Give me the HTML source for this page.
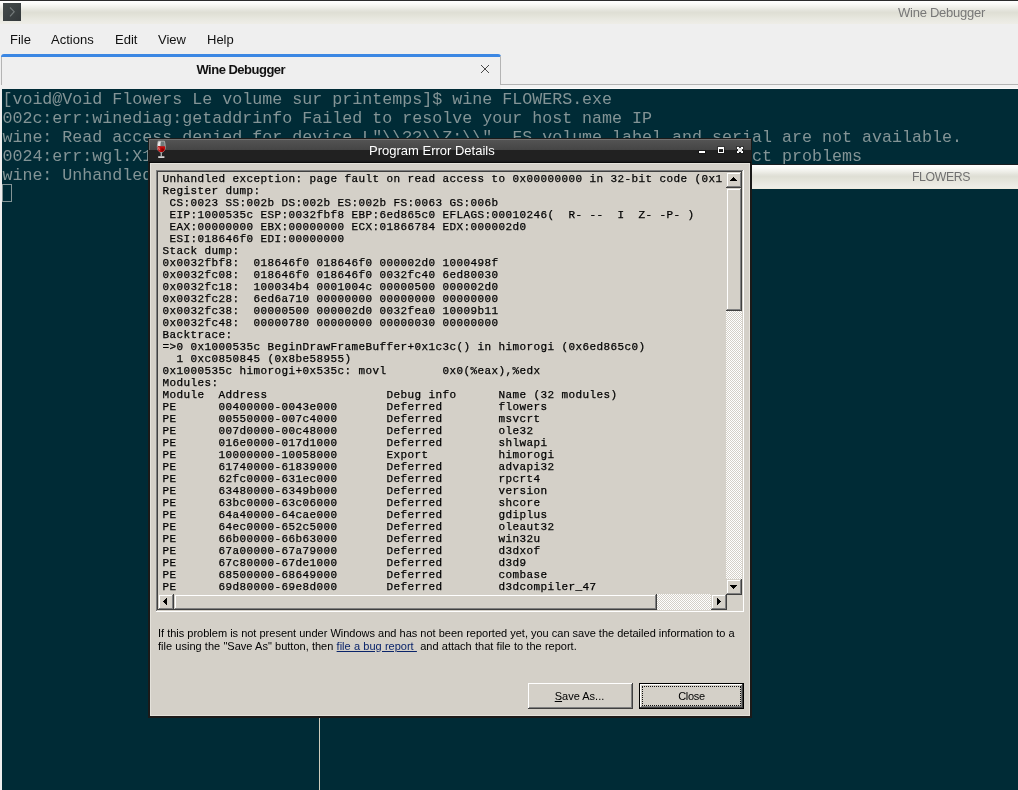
<!DOCTYPE html>
<html>
<head>
<meta charset="utf-8">
<title>Wine Debugger</title>
<style>
html,body{margin:0;padding:0;}
body{width:1018px;height:790px;overflow:hidden;position:relative;background:#efefef;font-family:"Liberation Sans",sans-serif;}
.abs{position:absolute;}
/* ---------- host window chrome ---------- */
#topline{left:0;top:0;width:1018px;height:1px;background:#2b2b2b;}
#titlebar{left:0;top:1px;width:1018px;height:23px;background:linear-gradient(#ffffff 0,#fafaf7 3px,#ededE7 7px,#e2e2d9 10px,#dfdfd5 11.5px,#e2e2d8 14px,#e8e8e0 18px,#eeede7 23px);}
#appicon{left:3px;top:3px;width:18px;height:18px;background:linear-gradient(135deg,#454b4b,#33383a);}
#wtitle{left:898px;top:5px;font-size:13px;line-height:15px;color:#787878;white-space:nowrap;letter-spacing:-0.25px;}
#menubar{left:0;top:24px;width:1018px;height:30px;background:#efefef;}
.mi{position:absolute;top:32px;font-size:13px;line-height:15px;color:#111;white-space:nowrap;}
#tabrow{left:0;top:54px;width:1018px;height:35px;background:#efefef;}
#tabrow2{left:0;top:85px;width:1018px;height:3px;background:#f3f3f3;}
#tabrow3{left:2px;top:88px;width:1016px;height:1px;background:#fbfbfb;}
#tab{left:1px;top:54px;width:500px;height:35px;background:#efefef;border-top:3px solid #3b87e3;box-sizing:border-box;border-radius:3px 3px 0 0;}
#tabright{left:500px;top:56px;width:1px;height:29px;background:#b4b4b4;}
#tabbottom{left:500px;top:84px;width:518px;height:1px;background:#b4b4b4;}
#tableft{left:1px;top:57px;width:1px;height:28px;background:#b4b4b4;}
#tablabel{left:1.8px;top:62px;width:478px;text-align:center;font-size:13px;line-height:16px;font-weight:bold;color:#111;letter-spacing:-0.5px;}
/* ---------- terminal ---------- */
#term{left:2px;top:89px;width:1016px;height:701px;background:#002b36;}
#termtext{left:2.4px;top:90px;margin:0;font-family:"Liberation Mono",monospace;font-size:16.67px;line-height:19px;color:#839496;white-space:pre;}
#cursor{left:2px;top:184px;width:10px;height:18px;border:1px solid #839496;box-sizing:border-box;}
#flowers{left:752px;top:165px;width:266px;height:24px;background:linear-gradient(#ffffff 0,#fafaf7 3px,#ededE7 7px,#e2e2d9 10px,#dfdfd5 11.5px,#e2e2d8 14px,#e8e8e0 18px,#efeee8 23px,#f0ead8 24px);}
#flowerstxt{left:912px;top:170px;font-size:12.3px;line-height:15px;color:#707070;letter-spacing:-0.4px;white-space:nowrap;}
#vline{left:319px;top:717px;width:1px;height:73px;background:#cfccbc;}
/* ---------- wine dialog ---------- */

#dlgframe{left:148px;top:138px;width:604px;height:580px;background:#1b1a19;}
#dlgtitle{left:149px;top:139px;width:602px;height:24px;background:linear-gradient(#707070 0,#707070 1px,#535353 1px,#454545 11px,#212121 11px,#212121 21px,#1a1a1a 22px,#181818 23px,#0a0a0a 23px,#0a0a0a 24px);}
#dlgtitlehl{left:149px;top:140px;width:1px;height:10px;background:#6a6a6a;}
#dlgtitletxt{left:369px;top:143px;font-size:13px;line-height:15px;color:#fff;white-space:nowrap;}
#dlgbody{left:150px;top:163px;width:600px;height:553px;background:#d4d0c8;box-sizing:border-box;border:1px solid #e4e1da;}
.tb{position:absolute;background:#fff;}
/* text box */
#tbox{left:156px;top:170px;width:588px;height:442px;box-sizing:border-box;background:#d4d0c8;box-shadow:inset -1px -1px #fff,inset 1px 1px #808080,inset -2px -2px #d4d0c8,inset 2px 2px #404040;}
#dump{left:162.5px;top:173px;width:564px;height:422px;overflow:hidden;margin:0;font-family:"Liberation Mono",monospace;font-size:11px;letter-spacing:0.4px;line-height:12px;color:#000;white-space:pre;-webkit-text-stroke:0.25px #000;}
.track{position:absolute;background-color:#d4d0c8;background-image:conic-gradient(#fff 25%,#d4d0c8 0 50%,#fff 0 75%,#d4d0c8 0);background-size:2px 2px;}
.btn3d{position:absolute;box-sizing:border-box;background:#d4d0c8;box-shadow:inset -1px -1px #404040,inset 1px 1px #fff,inset -2px -2px #808080,inset 2px 2px #d4d0c8;}
.sb3d{position:absolute;box-sizing:border-box;background:#d4d0c8;box-shadow:inset -1px -1px #404040,inset 1px 1px #d4d0c8,inset -2px -2px #808080,inset 2px 2px #fff;}
.sb3d svg{position:absolute;display:block;}
#msg{left:158px;top:627px;font-size:11px;line-height:13px;color:#000;white-space:nowrap;}
#msg a{color:#0a246a;text-decoration:underline;}
.pbtn{position:absolute;font-size:11px;line-height:13px;color:#000;text-align:center;}

</style>
</head>
<body>
<div id="layer" style="position:absolute;left:0;top:0;width:1018px;height:790px;will-change:transform;">
<div class="abs" id="titlebar"></div>
<div class="abs" id="topline"></div>
<div class="abs" id="appicon"><svg width="18" height="18" viewBox="0 0 18 18" style="display:block"><path d="M7 4.5 L11.2 8.7 L7 13.3" fill="none" stroke="#757b7b" stroke-width="1.15"/></svg></div>
<div class="abs" id="wtitle">Wine Debugger</div>
<div class="abs" id="menubar"></div>
<span class="mi" style="left:10px">File</span>
<span class="mi" style="left:51px">Actions</span>
<span class="mi" style="left:115px">Edit</span>
<span class="mi" style="left:158px">View</span>
<span class="mi" style="left:207px">Help</span>
<div class="abs" id="tabrow"></div>
<div class="abs" id="tabrow2"></div>
<div class="abs" id="tabrow3"></div>
<div class="abs" id="tab"></div>
<div class="abs" id="tableft"></div>
<div class="abs" id="tabright"></div>
<div class="abs" id="tabbottom"></div>
<div class="abs" id="tablabel">Wine Debugger</div>
<svg class="abs" style="left:480px;top:64px" width="10" height="10" viewBox="0 0 10 10"><path d="M1 1 L9 9 M9 1 L1 9" stroke="#484848" stroke-width="1" fill="none"/></svg>
<div class="abs" id="term"></div>
<pre class="abs" id="termtext">[void@Void Flowers Le volume sur printemps]$ wine FLOWERS.exe
002c:err:winediag:getaddrinfo Failed to resolve your host name IP
wine: Read access denied for device L"\\??\\Z:\\", FS volume label and serial are not available.
0024:err:wgl:X11DRV_WineGL_InitOpenglInfo  couldn't initialize OpenGL, expect problems
wine: Unhandled page fault on read access to 00000000 at address 1000535C</pre>
<div class="abs" id="cursor"></div>
<div class="abs" style="left:752px;top:164px;width:266px;height:1px;background:#1a1f22"></div>
<div class="abs" id="flowers"></div>
<div class="abs" id="flowerstxt">FLOWERS</div>
<div class="abs" id="vline"></div>
<div class="abs" id="dlgframe"></div>
<div class="abs" id="dlgtitle"></div>
<div class="abs" id="dlgtitlehl"></div>
<div class="abs" id="dlgtitletxt">Program Error Details</div>
<div class="abs" id="dlgbody"></div>
<svg class="abs" style="left:696px;top:144px" width="50" height="12" viewBox="0 0 50 12" shape-rendering="crispEdges">
<rect x="2" y="6" width="8" height="4" fill="#111" opacity="0.55"/><rect x="3" y="7" width="6" height="2" fill="#fff"/>
<rect x="21" y="2" width="8" height="8" fill="#111" opacity="0.35"/><path d="M22 3h6v6h-6z M23 5v3h4v-3z" fill="#fff" fill-rule="evenodd"/>
<rect x="40" y="2" width="8" height="8" fill="#111" opacity="0.35"/>
<path d="M41 3h2v1h2v-1h2v2h-1v2h1v2h-2v-1h-2v1h-2v-2h1v-2h-1z" fill="#fff"/>
<rect x="42" y="4" width="4" height="4" fill="#e2e2e2"/>
</svg>
<svg class="abs" style="left:156px;top:140px" width="11" height="19" viewBox="0 0 11 19">
<path d="M2.2 1.2 C1.4 4 1.2 7 1.6 9 C2.2 11.3 4 12.4 5.3 12.4 C6.6 12.4 8.4 11.3 9 9 C9.4 7 9.2 4 8.4 1.2 Z" fill="#6f7a7a" stroke="#c4c4c4" stroke-width="0.7"/>
<path d="M1.7 6.2 L8.9 6.2 C9.2 8 9 9.4 8.5 10.3 C7.6 11.8 6.3 12.2 5.3 12.2 C4.3 12.2 3 11.8 2.1 10.3 C1.6 9.4 1.4 8 1.7 6.2 Z" fill="#c00a0a"/>
<path d="M5.3 8.2 C6.6 8.2 8.1 8.6 8.4 9.8 C7.6 11.5 6.3 12 5.3 12 Z" fill="#8e0000"/>
<path d="M2.5 1.6 C2 3.6 1.9 5 2 6 L4.4 6 C4.4 4.5 4.5 2.8 4.9 1.6 Z" fill="#e8e8e8"/>
<path d="M2.2 7.2 C2.2 8.6 2.6 9.6 3.2 10.4 L3.8 9.6 C3.4 8.8 3.3 8 3.4 7.2 Z" fill="#f0b0b0" opacity="0.8"/>
<rect x="4.6" y="12.2" width="1.4" height="4.2" fill="#a8a8a8"/>
<rect x="2.2" y="16.2" width="6.2" height="1.8" fill="#d0d0d0"/>
</svg>

<div class="abs" id="tbox"></div>
<pre class="abs" id="dump">Unhandled exception: page fault on read access to 0x00000000 in 32-bit code (0x1
Register dump:
 CS:0023 SS:002b DS:002b ES:002b FS:0063 GS:006b
 EIP:1000535c ESP:0032fbf8 EBP:6ed865c0 EFLAGS:00010246(  R- --  I  Z- -P- )
 EAX:00000000 EBX:00000000 ECX:01866784 EDX:000002d0
 ESI:018646f0 EDI:00000000
Stack dump:
0x0032fbf8:  018646f0 018646f0 000002d0 1000498f
0x0032fc08:  018646f0 018646f0 0032fc40 6ed80030
0x0032fc18:  100034b4 0001004c 00000500 000002d0
0x0032fc28:  6ed6a710 00000000 00000000 00000000
0x0032fc38:  00000500 000002d0 0032fea0 10009b11
0x0032fc48:  00000780 00000000 00000030 00000000
Backtrace:
=&gt;0 0x1000535c BeginDrawFrameBuffer+0x1c3c() in himorogi (0x6ed865c0)
  1 0xc0850845 (0x8be58955)
0x1000535c himorogi+0x535c: movl        0x0(%eax),%edx
Modules:
Module  Address                 Debug info      Name (32 modules)
PE      00400000-0043e000       Deferred        flowers
PE      00550000-007c4000       Deferred        msvcrt
PE      007d0000-00c48000       Deferred        ole32
PE      016e0000-017d1000       Deferred        shlwapi
PE      10000000-10058000       Export          himorogi
PE      61740000-61839000       Deferred        advapi32
PE      62fc0000-631ec000       Deferred        rpcrt4
PE      63480000-6349b000       Deferred        version
PE      63bc0000-63c06000       Deferred        shcore
PE      64a40000-64cae000       Deferred        gdiplus
PE      64ec0000-652c5000       Deferred        oleaut32
PE      66b00000-66b63000       Deferred        win32u
PE      67a00000-67a79000       Deferred        d3dxof
PE      67c80000-67de1000       Deferred        d3d9
PE      68500000-68649000       Deferred        combase
PE      69d80000-69e8d000       Deferred        d3dcompiler_47</pre>
<!-- vertical scrollbar -->
<div class="track" style="left:726px;top:172px;width:16px;height:423px"></div>
<div class="sb3d" style="left:726px;top:172px;width:16px;height:16px"><svg style="left:4px;top:5px" width="7" height="4" viewBox="0 0 7 4" shape-rendering="crispEdges"><path d="M3 0h1v1h1v1h1v1h1v1h-7v-1h1v-1h1v-1h1z" fill="#000"/></svg></div>
<div class="sb3d" style="left:726px;top:188px;width:16px;height:123px"></div>
<div class="sb3d" style="left:726px;top:579px;width:16px;height:16px"><svg style="left:4px;top:6px" width="7" height="4" viewBox="0 0 7 4" shape-rendering="crispEdges"><path d="M0 0h7v1h-1v1h-1v1h-1v1h-1v-1h-1v-1h-1v-1h-1z" fill="#000"/></svg></div>
<!-- horizontal scrollbar -->
<div class="track" style="left:158px;top:594px;width:569px;height:16px"></div>
<div class="sb3d" style="left:158px;top:594px;width:16px;height:16px"><svg style="left:5px;top:4px" width="4" height="7" viewBox="0 0 4 7" shape-rendering="crispEdges"><path d="M3 0h1v7h-1v-1h-1v-1h-1v-1h-1v-1h1v-1h1v-1h1z" fill="#000"/></svg></div>
<div class="sb3d" style="left:174px;top:594px;width:483px;height:16px"></div>
<div class="sb3d" style="left:711px;top:594px;width:16px;height:16px"><svg style="left:6px;top:4px" width="4" height="7" viewBox="0 0 4 7" shape-rendering="crispEdges"><path d="M0 0h1v1h1v1h1v1h1v1h-1v1h-1v1h-1v1h-1z" fill="#000"/></svg></div>
<div class="abs" id="msg">If this problem is not present under Windows and has not been reported yet, you can save the detailed information to a<br><span style="word-spacing:0.2px">file using the "Save As" button, then <a>file a bug report&nbsp;</a> and attach that file to the report.</span></div>
<div class="btn3d" style="left:528px;top:683px;width:105px;height:26px"></div>
<div class="pbtn" style="left:527px;top:690px;width:105px"><u>S</u>ave As...</div>
<div class="abs" style="left:639px;top:683px;width:105px;height:26px;background:#000"></div>
<div class="btn3d" style="left:640px;top:684px;width:103px;height:24px"></div>
<div class="abs" style="left:642px;top:686px;width:99px;height:20px;box-sizing:border-box;border:1px dotted #111"></div>
<div class="pbtn" style="left:639px;top:690px;width:105px;letter-spacing:-0.3px">Close</div>
</div>
</body>
</html>
